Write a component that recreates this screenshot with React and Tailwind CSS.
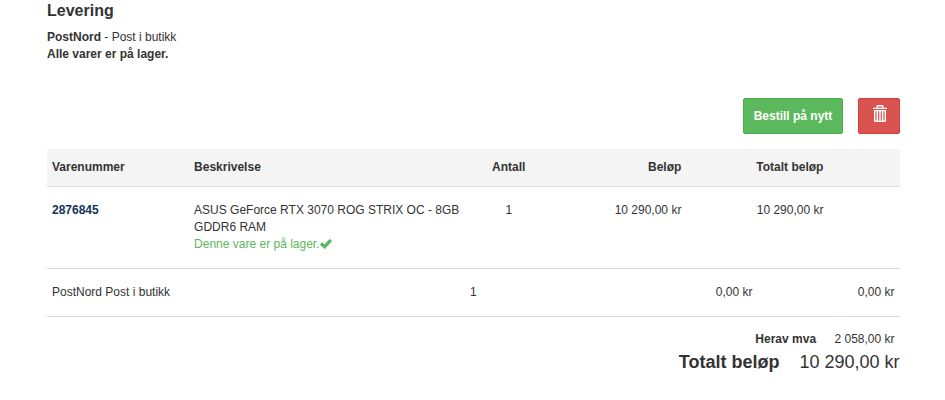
import React from 'react';

const items = [
  {
    id: '2876845',
    description: 'ASUS GeForce RTX 3070 ROG STRIX OC - 8GB GDDR6 RAM',
    stock: 'Denne vare er på lager.',
    quantity: 1,
    price: '10 290,00 kr',
    total: '10 290,00 kr'
  }
];

function TrashIcon() {
  return (
    <svg viewBox="0 0 14 17" className="h-[17px] w-[14px]" fill="white" aria-hidden="true">
      <path d="M3.4 3V1.4Q3.4 0 4.8 0h4.4q1.4 0 1.4 1.4V3H9.3V1.4H4.7V3zM0 3.4q0-.6.5-.6h13q.5 0 .5.6V4H0z" />
      <path
        fillRule="evenodd"
        d="M1 5h12v10.8q0 1.2-1.2 1.2H2.2Q1 17 1 15.8zM2.4 6.2v9.4h1.2V6.2zM5.1 6.2v9.4h1.2V6.2zM7.7 6.2v9.4h1.2V6.2zM10.4 6.2v9.4h1.2V6.2z"
      />
    </svg>
  );
}

function CheckIcon() {
  return (
    <svg viewBox="0 0 12 10" className="inline-block h-[10px] w-[12px] align-[-1px]" fill="#5cb85c" aria-hidden="true">
      <path d="M.2 5.3 1.8 3.6q.4-.4.8 0l1.8 1.8L9.3.2q.4-.4.8 0l1.7 1.6q.4.4 0 .8L5 9.7q-.4.4-.8 0L.2 6.1q-.4-.4 0-.8z" />
    </svg>
  );
}

export default function App() {
  return (
    <main className="h-[400px] w-[945px] overflow-hidden bg-white pr-[45.5px] pl-[47px] font-['Liberation_Sans',Arial,sans-serif] text-xs leading-[17.14px] text-[#333]">
      <section>
        <h4 className="pt-px text-base leading-[20px] font-bold">Levering</h4>
        <p className="mt-[8px]">
          <b>PostNord</b> - Post i butikk
        </p>
        <p className="font-bold">Alle varer er på lager.</p>
      </section>

      <div className="mt-[34.7px] -mr-[0.5px] flex justify-end gap-[15px]">
        <button
          type="button"
          className="h-9 w-[100px] rounded-[2px] border border-[#4cae4c] bg-[#5cb85c] pt-px font-bold text-white"
        >
          Bestill på nytt
        </button>
        <button
          type="button"
          aria-label="Slett"
          className="flex h-9 w-[42px] justify-center rounded-[2px] border border-[#d43f3a] bg-[#d9534f] pt-[6px] pl-[2px]"
        >
          <TrashIcon />
        </button>
      </div>

      <div className="mt-[15px] grid h-[38px] grid-cols-12 border-b border-[#ddd] bg-[#f4f4f4] pt-[10px] font-bold">
        <div className="col-span-2 px-[5px]">Varenummer</div>
        <div className="col-span-4 px-[5px]">Beskrivelse</div>
        <div className="px-[5px] text-center">Antall</div>
        <div className="col-span-2 px-[5px] text-right">Beløp</div>
        <div className="col-span-2 px-[5px] text-right">Totalt beløp</div>
      </div>

      {items.map((item) => (
        <div key={item.id} className="grid h-[82px] grid-cols-12 border-b border-[#ddd] pt-[15px]">
          <div className="col-span-2 px-[5px] font-bold text-[#14335c]">{item.id}</div>
          <div className="col-span-4 px-[5px]">
            {item.description}
            <div className="text-[#5cb85c]">
              {item.stock}
              <CheckIcon />
            </div>
          </div>
          <div className="px-[5px] text-center">{item.quantity}</div>
          <div className="col-span-2 px-[5px] text-right">{item.price}</div>
          <div className="col-span-2 px-[5px] text-right">{item.total}</div>
        </div>
      ))}

      <div className="grid h-12 grid-cols-12 border-b border-[#ddd] pt-[15px]">
        <div className="col-span-5 px-[5px]">PostNord Post i butikk</div>
        <div className="col-span-2 px-[5px] text-center">1</div>
        <div className="col-span-3 px-[5px] text-right">0,00 kr</div>
        <div className="col-span-2 px-[5px] text-right">0,00 kr</div>
      </div>

      <div className="mt-[14px] flex justify-end gap-[18.4px] pr-[5px]">
        <b>Herav mva</b>
        <span>2 058,00 kr</span>
      </div>
      <div className="mt-px flex justify-end gap-5 text-lg leading-[26px]">
        <b>Totalt beløp</b>
        <span>10 290,00 kr</span>
      </div>
    </main>
  );
}
